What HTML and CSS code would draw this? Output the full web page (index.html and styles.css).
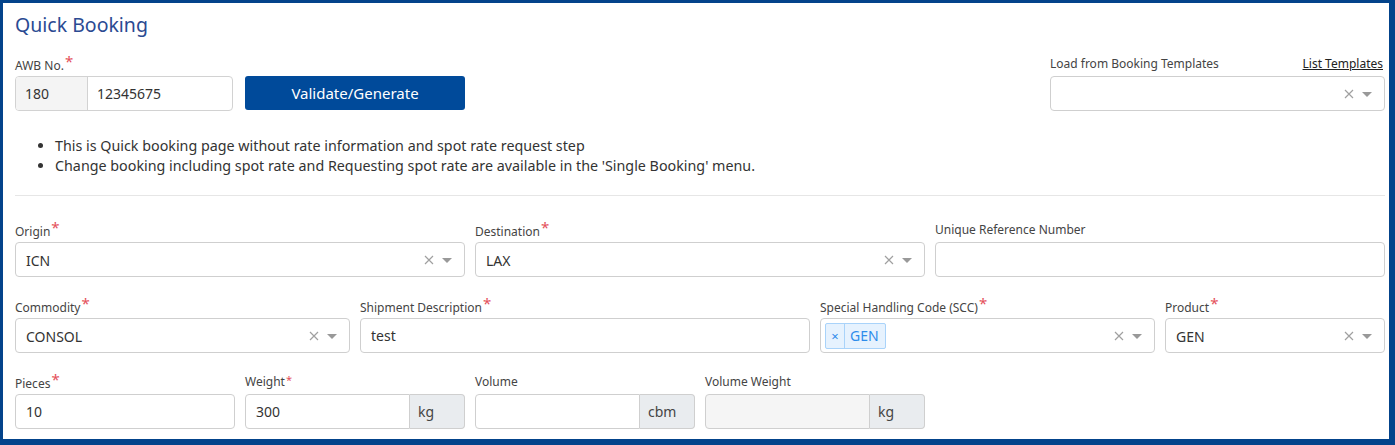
FILE: index.html
```html
<!DOCTYPE html>
<html lang="en">
<head>
<meta charset="utf-8">
<title>Quick Booking</title>
<link rel="stylesheet" href="styles.css">
</head>
<body>
<div class="frame">
  <h1 class="title">Quick Booking</h1>

  <div class="grid top-row">
    <div class="field span-2">
      <div class="label">AWB No.<span class="req">*</span></div>
      <div class="awb-group">
        <div class="awb-prefix">180</div>
        <div class="awb-number">12345675</div>
      </div>
    </div>
    <div class="field span-2">
      <div class="label">&nbsp;</div>
      <button class="btn-primary" type="button">Validate/Generate</button>
    </div>
    <div class="field span-3 push-right">
      <div class="label label-split">
        <span>Load from Booking Templates</span>
        <a class="link" href="#">List Templates</a>
      </div>
      <div class="select">
        <span class="select-value"></span>
        <svg class="clear" viewBox="0 0 10 10" width="10" height="10"><path d="M1 1L9 9M9 1L1 9"/></svg>
        <span class="caret"></span>
      </div>
    </div>
  </div>

  <ul class="notes">
    <li>This is Quick booking page without rate information and spot rate request step</li>
    <li>Change booking including spot rate and Requesting spot rate are available in the 'Single Booking' menu.</li>
  </ul>

  <hr class="divider">

  <div class="grid form-row">
    <div class="field span-4">
      <div class="label">Origin<span class="req">*</span></div>
      <div class="select"><span class="select-value">ICN</span><svg class="clear" viewBox="0 0 10 10" width="10" height="10"><path d="M1 1L9 9M9 1L1 9"/></svg><span class="caret"></span></div>
    </div>
    <div class="field span-4">
      <div class="label">Destination<span class="req">*</span></div>
      <div class="select"><span class="select-value">LAX</span><svg class="clear" viewBox="0 0 10 10" width="10" height="10"><path d="M1 1L9 9M9 1L1 9"/></svg><span class="caret"></span></div>
    </div>
    <div class="field span-4">
      <div class="label">Unique Reference Number</div>
      <div class="input"></div>
    </div>
  </div>

  <div class="grid form-row">
    <div class="field span-3">
      <div class="label">Commodity<span class="req">*</span></div>
      <div class="select"><span class="select-value">CONSOL</span><svg class="clear" viewBox="0 0 10 10" width="10" height="10"><path d="M1 1L9 9M9 1L1 9"/></svg><span class="caret"></span></div>
    </div>
    <div class="field span-4">
      <div class="label">Shipment Description<span class="req">*</span></div>
      <div class="input">test</div>
    </div>
    <div class="field span-3">
      <div class="label">Special Handling Code (SCC)<span class="req">*</span></div>
      <div class="select select-multi">
        <span class="select-value">
          <span class="tag"><span class="tag-x">×</span><span class="tag-text">GEN</span></span>
        </span>
        <svg class="clear" viewBox="0 0 10 10" width="10" height="10"><path d="M1 1L9 9M9 1L1 9"/></svg><span class="caret"></span>
      </div>
    </div>
    <div class="field span-2">
      <div class="label">Product<span class="req">*</span></div>
      <div class="select"><span class="select-value">GEN</span><svg class="clear" viewBox="0 0 10 10" width="10" height="10"><path d="M1 1L9 9M9 1L1 9"/></svg><span class="caret"></span></div>
    </div>
  </div>

  <div class="grid form-row">
    <div class="field span-2">
      <div class="label">Pieces<span class="req">*</span></div>
      <div class="input">10</div>
    </div>
    <div class="field span-2">
      <div class="label">Weight<span class="req req-small">*</span></div>
      <div class="input-group">
        <div class="input">300</div>
        <div class="addon">kg</div>
      </div>
    </div>
    <div class="field span-2">
      <div class="label">Volume</div>
      <div class="input-group">
        <div class="input"></div>
        <div class="addon">cbm</div>
      </div>
    </div>
    <div class="field span-2">
      <div class="label">Volume Weight</div>
      <div class="input-group">
        <div class="input input-disabled"></div>
        <div class="addon">kg</div>
      </div>
    </div>
  </div>
</div>
</body>
</html>
```

FILE: styles.css
```css
* { box-sizing: border-box; }

html, body {
  margin: 0;
  padding: 0;
  background: #ffffff;
}

body {
  font-family: "Noto Sans", "Open Sans", "Liberation Sans", sans-serif;
  color: #333;
}

.frame {
  width: 1395px;
  height: 445px;
  overflow: hidden;
  border-style: solid;
  border-color: #03438b;
  border-width: 3px 6px 6px 3px;
  padding: 8px 4px 0 12px;
  background: #fff;
}

.title {
  margin: 0;
  font-size: 19.5px;
  line-height: 28px;
  font-weight: 400;
  color: #2b4a92;
}

.grid {
  display: grid;
  grid-template-columns: repeat(12, 1fr);
  column-gap: 10px;
}

.span-2 { grid-column: span 2; }
.span-3 { grid-column: span 3; }
.span-4 { grid-column: span 4; }
.push-right { grid-column: 10 / span 3; }

.top-row { margin-top: 15px; }

.field { min-width: 0; }

.label {
  font-size: 12px;
  line-height: 18px;
  height: 19px;
  padding-top: 1px;
  margin-bottom: 3px;
  color: #444;
  white-space: nowrap;
}

.label-split {
  display: flex;
  justify-content: space-between;
  padding-right: 2px;
}

.link {
  color: #222;
  text-decoration: underline;
}

.req {
  color: #e4505a;
  font-size: 15px;
  position: relative;
  top: -3px;
  margin-left: 1px;
}

.req-small {
  font-size: 11px;
  top: -2px;
}

.awb-group {
  display: flex;
  height: 35px;
  width: 218px;
  border: 1px solid #d2d2d2;
  border-radius: 4px;
  overflow: hidden;
  font-size: 14px;
}

.awb-prefix {
  width: 72px;
  background: #f4f4f4;
  border-right: 1px solid #d2d2d2;
  padding-left: 9px;
  line-height: 34px;
}

.awb-number {
  flex: 1;
  padding-left: 9px;
  line-height: 34px;
}

.btn-primary {
  display: block;
  width: 100%;
  height: 34px;
  border: 0;
  border-radius: 3px;
  background: #004a9a;
  color: #fff;
  font-family: inherit;
  font-size: 15px;
  padding: 0;
  cursor: pointer;
}

.select, .input {
  height: 35px;
  border: 1px solid #cfcfcf;
  border-radius: 4px;
  background: #fff;
  font-size: 14px;
  color: #333;
}

.select {
  display: flex;
  align-items: center;
  padding: 1px 12px 0 10px;
}

.select-value {
  flex: 1;
  min-width: 0;
}

.clear {
  width: 10px;
  height: 10px;
  margin-right: 8px;
  fill: none;
  stroke: #a0a0a0;
  stroke-width: 1.2;
}

.caret {
  width: 0;
  height: 0;
  border-left: 5px solid transparent;
  border-right: 5px solid transparent;
  border-top: 5px solid #999;
}

.select-multi { padding-left: 4px; }

.tag {
  display: inline-flex;
  height: 26px;
  border: 1px solid #a9d3fa;
  background: #e6f2fe;
  border-radius: 2px;
  color: #2d8ceb;
  vertical-align: middle;
}

.tag-x {
  width: 19px;
  text-align: center;
  border-right: 1px solid #a9d3fa;
  font-size: 13px;
  line-height: 24px;
}

.tag-text {
  padding: 0 6px 0 5px;
  font-size: 14px;
  line-height: 24px;
}

.input {
  padding-left: 10px;
  line-height: 34px;
}

.input-disabled {
  background: #f5f5f5;
}

.input-group {
  display: flex;
}

.input-group .input {
  flex: 1;
  border-top-right-radius: 0;
  border-bottom-right-radius: 0;
}

.addon {
  width: 55px;
  height: 35px;
  border: 1px solid #cfcfcf;
  border-left: 0;
  border-radius: 0 4px 4px 0;
  background: #e9ecef;
  padding-left: 8px;
  line-height: 34px;
  font-size: 14px;
  color: #444;
}

.notes {
  margin: 25px 0 0;
  padding-left: 40px;
  font-size: 14.3px;
  line-height: 20px;
  color: #333;
}

.divider {
  margin: 19px 0 24px;
  border: 0;
  border-top: 1px solid #e6e6e6;
  height: 0;
}

.form-row { margin-bottom: 19px; }
```
